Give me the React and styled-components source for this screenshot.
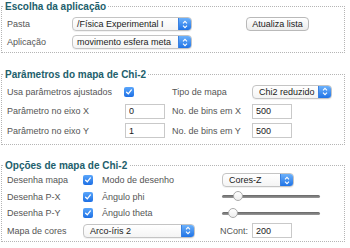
import React from "react";
import styled, { createGlobalStyle } from "styled-components";

const GlobalStyle = createGlobalStyle`
  html, body {
    margin: 0;
    padding: 0;
    background: #fff;
  }
  body {
    font-family: "Liberation Sans", Arial, sans-serif;
    font-size: 9px;
    color: #4a4a4a;
  }
`;

const Page = styled.div`
  width: 344px;
  padding: 0 0 0 1px;
`;

const Fieldset = styled.fieldset`
  margin: ${(p) => p.$top || 0}px 0 0 0;
  padding: 0 5px ${(p) => p.$bottom || 1}px 5px;
  border: 1px dotted #b5b5b5;
  min-width: 0;
`;

const Legend = styled.legend`
  padding: 0 2px;
  margin-left: -4px;
  font-size: 10px;
  font-weight: bold;
  line-height: 13px;
  color: #22606c;
`;

const Grid = styled.div`
  display: grid;
  grid-template-columns: ${(p) => p.$cols};
  grid-auto-rows: ${(p) => p.$rows};
  grid-template-rows: ${(p) => p.$rowList || "none"};
  padding-top: ${(p) => p.$pad || 0}px;
  align-items: center;
`;

const Label = styled.span`
  white-space: nowrap;
  color: #555;
  grid-column: ${(p) => p.$col || "auto"};
  margin-left: ${(p) => p.$shift || 0}px;
`;

const SelectBox = styled.div`
  display: flex;
  align-items: stretch;
  width: ${(p) => p.$w}px;
  height: 14px;
  box-sizing: border-box;
  border: 1px solid #c4c4c4;
  border-radius: 4px;
  background: linear-gradient(#ffffff, #f4f4f4);
  box-shadow: 0 1px 0 rgba(0, 0, 0, 0.05);
  overflow: hidden;
  grid-column: ${(p) => p.$col || "auto"};
`;

const SelectText = styled.span`
  flex: 1;
  padding-left: ${(p) => p.$pad || 6}px;
  line-height: 12px;
  color: #1a1a1a;
  white-space: nowrap;
  overflow: hidden;
`;

const Arrow = styled.span`
  width: 12px;
  display: flex;
  align-items: center;
  justify-content: center;
  background: linear-gradient(#6cb1fb, #1f73e6);
  border-left: 1px solid #3a80e0;
`;

const Select = ({ w, value, pad, col }) => (
  <SelectBox $w={w} $col={col}>
    <SelectText $pad={pad}>{value}</SelectText>
    <Arrow>
      <svg width="6" height="9" viewBox="0 0 6 9">
        <path d="M1 3.3 L3 1.3 L5 3.3 M1 5.7 L3 7.7 L5 5.7" fill="none" stroke="#fff" strokeWidth="1.1" />
      </svg>
    </Arrow>
  </SelectBox>
);

const Button = styled.button`
  grid-column: 4;
  grid-row: 1;
  width: 63px;
  height: 14px;
  padding: 0;
  font-family: inherit;
  font-size: 9px;
  line-height: 12px;
  white-space: nowrap;
  color: #1a1a1a;
  border: 1px solid #b9b9b9;
  border-radius: 4px;
  background: linear-gradient(#ffffff, #ececec);
`;

const Input = styled.input`
  width: 40px;
  height: 15px;
  box-sizing: border-box;
  padding: 0 0 0 3px;
  border: 1px solid #c9c9c9;
  font-family: inherit;
  font-size: 9px;
  color: #1a1a1a;
  outline: none;
`;

const CheckBox = styled.span`
  display: inline-flex;
  align-items: center;
  justify-content: center;
  width: 10px;
  height: 10px;
  border-radius: 2px;
  background: linear-gradient(#5aa6fb, #1d6fe4);
  margin-left: ${(p) => p.$shift || 0}px;
`;

const Check = ({ shift }) => (
  <CheckBox $shift={shift}>
    <svg width="8" height="8" viewBox="0 0 8 8">
      <path d="M1.6 4.2 L3.3 5.8 L6.4 1.9" fill="none" stroke="#fff" strokeWidth="1.3" strokeLinecap="round" />
    </svg>
  </CheckBox>
);

const Track = styled.div`
  position: relative;
  width: 98px;
  height: 3px;
  border-radius: 2px;
  background: linear-gradient(#666, #999);
`;

const Thumb = styled.span`
  position: absolute;
  top: -4px;
  width: 10px;
  height: 10px;
  box-sizing: border-box;
  border-radius: 50%;
  border: 1px solid #aaa;
  background: linear-gradient(#fff, #eee);
`;

const Slider = ({ pos }) => (
  <Track>
    <Thumb style={{ left: pos }} />
  </Track>
);

const Inline = styled.div`
  display: flex;
  align-items: center;
  gap: 4px;
  margin-left: -2px;
`;

export default function App() {
  return (
    <Page>
      <GlobalStyle />
      <Fieldset $bottom={0}>
        <Legend>Escolha da aplicação</Legend>
        <Grid $cols="65px 120px 54px 63px" $rows="18px" $pad={2}>
          <Label $col={1}>Pasta</Label>
          <Select w={120} value="/Física Experimental I" pad={4} />
          <Button>Atualiza lista</Button>
          <Label $col={1}>Aplicação</Label>
          <Select w={120} value="movimento esfera meta" pad={4} />
        </Grid>
      </Fieldset>

      <Fieldset $top={15} $bottom={3}>
        <Legend>Parâmetros do mapa de Chi-2</Legend>
        <Grid $cols="118px 47px 80px 90px" $rows="19.5px" $pad={1}>
          <Label>Usa parâmetros ajustados</Label>
          <Check shift={-1} />
          <Label>Tipo de mapa</Label>
          <Select w={80} value="Chi2 reduzido" />
          <Label>Parâmetro no eixo X</Label>
          <Input defaultValue="0" />
          <Label>No. de bins em X</Label>
          <Input defaultValue="500" />
          <Label>Parâmetro no eixo Y</Label>
          <Input defaultValue="1" />
          <Label>No. de bins em Y</Label>
          <Input defaultValue="500" />
        </Grid>
      </Fieldset>

      <Fieldset $top={14} $bottom={1}>
        <Legend>Opções de mapa de Chi-2</Legend>
        <Grid $cols="76px 19px 120px 110px" $rowList="17px 16.5px 16.5px 18px" $rows="18px" $pad={0}>
          <Label>Desenha mapa</Label>
          <Check />
          <Label>Modo de desenho</Label>
          <Select w={72} value="Cores-Z" />
          <Label>Desenha P-X</Label>
          <Check />
          <Label>Ângulo phi</Label>
          <Slider pos={11} />
          <Label>Desenha P-Y</Label>
          <Check />
          <Label>Ângulo theta</Label>
          <Slider pos={6} />
          <Label>Mapa de cores</Label>
          <Select w={112} value="Arco-íris 2" col="2 / span 2" />
          <Inline>
            <Label>NCont:</Label>
            <Input defaultValue="200" />
          </Inline>
        </Grid>
      </Fieldset>
    </Page>
  );
}
